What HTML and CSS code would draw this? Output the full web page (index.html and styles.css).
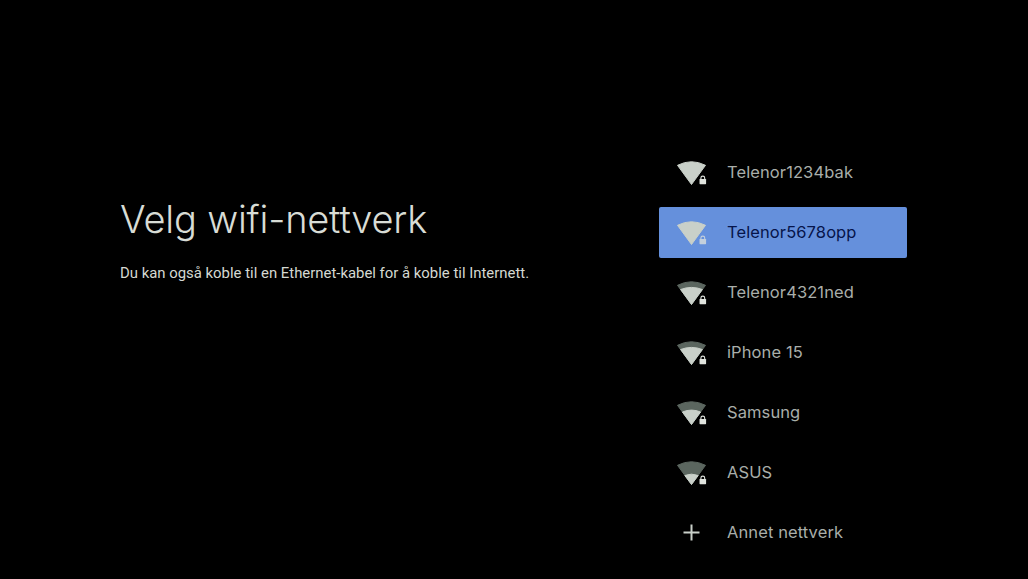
FILE: index.html
```html
<!DOCTYPE html>
<html lang="no">
<head>
<meta charset="utf-8">
<title>Velg wifi-nettverk</title>
<link rel="stylesheet" href="styles.css">
</head>
<body>
<svg class="defs" width="0" height="0" aria-hidden="true">
  <defs>
    <path id="fan" d="M1.500 8.300Q15.500 1.200 29.500 8.300L15.500 27.500Z"/>
    <g id="lock">
      <path d="M24.900 22.500v-1.500a1.900 1.900 0 0 1 3.800 0v1.500" fill="none" stroke="currentColor" stroke-width="1.100"/>
      <rect x="23.500" y="22" width="6.600" height="5.200" rx="0.600" fill="currentColor"/>
    </g>
  </defs>
</svg>
<main class="screen">
  <section class="intro">
    <h1 class="title">Velg wifi-nettverk</h1>
    <p class="desc">Du kan også koble til en Ethernet-kabel for å koble til Internett.</p>
  </section>
  <ul class="list">
    <li class="row">
      <svg class="icon" viewBox="0 0 32 30"><use class="bar" href="#fan"/><use href="#lock"/></svg>
      <span class="name">Telenor1234bak</span>
    </li>
    <li class="row selected">
      <svg class="icon" viewBox="0 0 32 30"><use class="bar" href="#fan"/><use href="#lock"/></svg>
      <span class="name">Telenor5678opp</span>
    </li>
    <li class="row">
      <svg class="icon" viewBox="0 0 32 30"><use class="dim" href="#fan"/><path class="bar" d="M4.600 12.500Q15.500 8.300 26.400 12.500L15.500 27.500Z"/><use href="#lock"/></svg>
      <span class="name">Telenor4321ned</span>
    </li>
    <li class="row">
      <svg class="icon" viewBox="0 0 32 30"><use class="dim" href="#fan"/><path class="bar" d="M4.600 12.500Q15.500 8.300 26.400 12.500L15.500 27.500Z"/><use href="#lock"/></svg>
      <span class="name">iPhone 15</span>
    </li>
    <li class="row">
      <svg class="icon" viewBox="0 0 32 30"><use class="dim" href="#fan"/><path class="bar" d="M6.400 15Q15.500 11.200 24.600 15L15.500 27.500Z"/><use href="#lock"/></svg>
      <span class="name">Samsung</span>
    </li>
    <li class="row">
      <svg class="icon" viewBox="0 0 32 30"><use class="dim" href="#fan"/><path class="bar" d="M8.800 18.500Q15.500 15.800 22.200 18.500L15.500 27.500Z"/><use href="#lock"/></svg>
      <span class="name">ASUS</span>
    </li>
    <li class="row">
      <svg class="icon" viewBox="0 0 32 30"><path class="plus" d="M15.500 7.500v16M7.500 15.500h16"/></svg>
      <span class="name">Annet nettverk</span>
    </li>
  </ul>
</main>
</body>
</html>
```
FILE: styles.css
```css
* { box-sizing: border-box; }
html, body { margin: 0; height: 100%; background: #000; overflow: hidden; }
.defs { position: absolute; }
.screen {
  width: 1028px;
  height: 579px;
  display: flex;
  justify-content: space-between;
  font-family: Inter, "Liberation Sans", sans-serif;
  padding: 147px 121px 12px 120px;
}
.intro { width: 440px; padding-top: 48px; }
.title {
  margin: 0;
  font-size: 38px;
  line-height: 48px;
  font-weight: 350;
  color: #d8dcd5;
  letter-spacing: -0.2px;
}
.desc {
  margin: 20px 0 0;
  font-family: Roboto, sans-serif;
  font-size: 14.900px;
  line-height: 20px;
  color: #d5d9d2;
}
.list {
  list-style: none;
  margin: 0;
  padding: 0;
  width: 248px;
  display: flex;
  flex-direction: column;
  gap: 9px;
}
.row {
  height: 51px;
  display: flex;
  align-items: center;
  padding: 0 0 2px 17px;
  gap: 19px;
  border-radius: 2px;
  color: #a9aeaa;
}
.row.selected { background: #6590dc; color: #06144a; }
.icon { width: 32px; height: 30px; flex: none; color: #dfe3dd; }
.selected .icon { color: #c4d0dc; }
.bar { fill: #c9d0c9; stroke: #c9d0c9; stroke-width: 1; stroke-linejoin: round; }
.dim { fill: #5b665f; stroke: #5b665f; stroke-width: 1; stroke-linejoin: round; }
.plus { fill: none; stroke: #c9d0c9; stroke-width: 2; }
.name { font-size: 16.500px; font-weight: 400; letter-spacing: 0.1px; }
```
